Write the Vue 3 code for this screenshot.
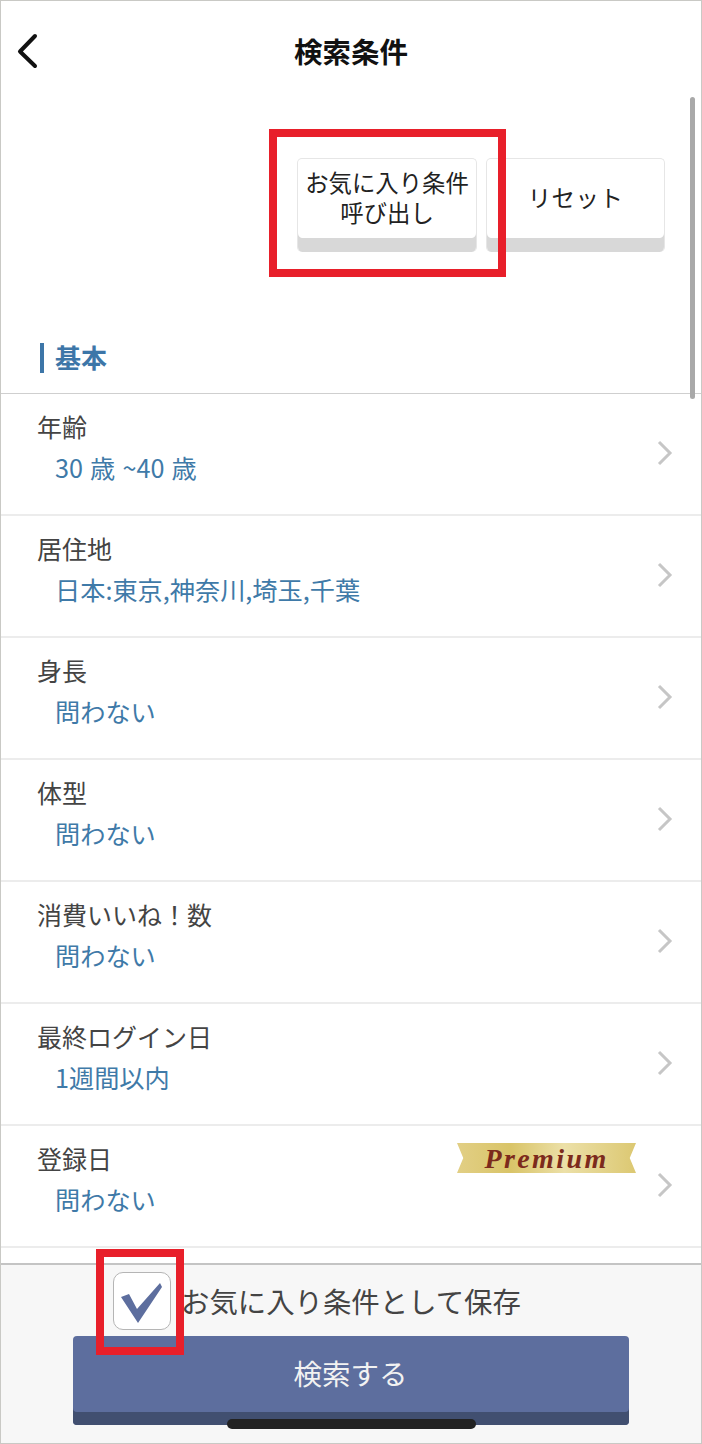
<template>
  <div class="screen">
    <header class="nav">
      <button class="back">
        <svg width="24" height="36" viewBox="0 0 24 36">
          <path d="M20 3 L5 18.5 L20 33" fill="none" stroke="#111" stroke-width="4" stroke-linecap="round" stroke-linejoin="round" />
        </svg>
      </button>
      <h1>検索条件</h1>
    </header>

    <div class="actions">
      <button class="btn-light">お気に入り条件<br>呼び出し</button>
      <button class="btn-light btn-reset">リセット</button>
    </div>

    <h2 class="section">基本</h2>

    <ul class="conditions">
      <li class="row" v-for="item in conditions" :key="item.label">
        <div class="row__text">
          <span class="row__label">{{ item.label }}</span>
          <span class="row__value">{{ item.value }}</span>
        </div>
        <div class="ribbon" v-if="item.premium">
          <span>Premium</span>
        </div>
        <svg class="chevron" width="16" height="26" viewBox="0 0 16 26">
          <path d="M2 2 L13 13 L2 24" fill="none" stroke="#c6c6c6" stroke-width="3" />
        </svg>
      </li>
    </ul>

    <footer class="footer">
      <label class="save">
        <span class="checkbox">
          <svg class="checkbox__mark" width="46" height="44" viewBox="0 0 46 44">
            <path d="M2 16 L10 13 L18 28 L41 2 L43 6 L19 42 Z" fill="#5d6e9e" />
          </svg>
        </span>
        <span class="save__text">お気に入り条件として保存</span>
      </label>
      <button class="btn-search">検索する</button>
    </footer>

    <div class="scroll-thumb"></div>
    <div class="home-bar"></div>
    <div class="mark mark--top"></div>
    <div class="mark mark--check"></div>
  </div>
</template>

<script setup>
const conditions = [
  { label: '年齢', value: '30 歳 ~40 歳' },
  { label: '居住地', value: '日本:東京,神奈川,埼玉,千葉' },
  { label: '身長', value: '問わない' },
  { label: '体型', value: '問わない' },
  { label: '消費いいね\uFF01数', value: '問わない' },
  { label: '最終ログイン日', value: '1週間以内' },
  { label: '登録日', value: '問わない', premium: true }
]
</script>

<style>
html, body {
  margin: 0;
  background: #fff;
}
</style>

<style scoped>
.screen {
  position: relative;
  width: 702px;
  height: 1444px;
  box-sizing: border-box;
  overflow: hidden;
  display: flex;
  flex-direction: column;
  background: #fff;
  border: 1px solid #c9c9c5;
  font-family: "Noto Sans CJK JP", "Noto Sans", sans-serif;
}

.nav {
  position: relative;
  height: 97px;
  padding-top: 2px;
  display: flex;
  align-items: center;
  justify-content: center;
  flex-shrink: 0;
}

.nav h1 {
  margin: 0;
  font-size: 28.5px;
  font-weight: 700;
  color: #111;
  line-height: 1;
}

.back {
  position: absolute;
  left: 14px;
  top: 32px;
  padding: 0;
  border: none;
  background: none;
}

.actions {
  display: flex;
  justify-content: flex-end;
  gap: 9px;
  padding: 58px 36px 0 0;
  flex-shrink: 0;
}

.btn-light {
  width: 180px;
  height: 94px;
  box-sizing: border-box;
  padding: 0 0 17px;
  border: 1px solid #e6e6e6;
  border-bottom: none;
  border-radius: 5px;
  background: #fff;
  box-shadow: inset 0 -14px 0 #d8d8d8;
  font-family: inherit;
  font-size: 23.4px;
  line-height: 30px;
  color: #222;
}

.btn-reset {
  width: 179px;
  letter-spacing: 0.5px;
}

.section {
  margin: 91px 0 0 39px;
  height: 30px;
  padding-left: 11px;
  border-left: 4px solid #3d76a8;
  font-size: 26px;
  font-weight: 700;
  line-height: 28px;
  color: #3d76a8;
  flex-shrink: 0;
}

.conditions {
  list-style: none;
  margin: 20px 0 0;
  padding: 0;
  border-top: 1px solid #cfcfcf;
  flex-shrink: 0;
}

.row {
  position: relative;
  height: 122px;
  box-sizing: border-box;
  padding: 15px 28px 0 36px;
  display: flex;
  justify-content: space-between;
  border-bottom: 2px solid #ececec;
}

.row__text {
  display: flex;
  flex-direction: column;
  gap: 7px;
}

.row__label {
  font-size: 25px;
  line-height: 34px;
  color: #444;
}

.row__value {
  padding-left: 18px;
  font-size: 25.2px;
  line-height: 34px;
  word-spacing: 1.5px;
  color: #3f7aa8;
}

.chevron {
  align-self: center;
  margin-top: -17px;
}

.ribbon {
  position: absolute;
  left: 456px;
  top: 17px;
  width: 179px;
  height: 30px;
  display: flex;
  align-items: center;
  justify-content: center;
  background: linear-gradient(90deg, #e2cf85 0%, #d9c468 30%, #ece0a8 60%, #dcc872 100%);
  clip-path: polygon(0 0, 100% 0, 96.5% 50%, 100% 100%, 0 100%, 3.5% 50%);
}

.ribbon span {
  margin-top: 2px;
  font-family: "Liberation Serif", serif;
  font-style: italic;
  font-weight: 700;
  font-size: 28px;
  letter-spacing: 2.4px;
  color: #7c2a1c;
}

.footer {
  position: absolute;
  left: 0;
  right: 0;
  bottom: 0;
  height: 178px;
  display: flex;
  flex-direction: column;
  align-items: center;
  background: #f7f7f7;
  border-top: 2px solid #c4c4c4;
}

.save {
  display: flex;
  align-items: center;
  height: 71px;
  align-self: flex-start;
  padding: 0 0 0 112px;
}

.checkbox {
  width: 58px;
  height: 58px;
  box-sizing: border-box;
  display: flex;
  align-items: center;
  justify-content: center;
  background: #fff;
  border: 1px solid #b5b5b5;
  border-radius: 10px;
}

.checkbox__mark {
  margin-top: 4px;
  flex-shrink: 0;
}

.save__text {
  margin-left: 10px;
  font-size: 28.4px;
  color: #444;
}

.btn-search {
  width: 556px;
  height: 89px;
  flex-shrink: 0;
  padding: 0 0 17px;
  margin-right: 1px;
  border: none;
  border-radius: 4px;
  background: #5d6e9e;
  box-shadow: inset 0 -13px 0 #414f70;
  font-family: inherit;
  font-size: 28.5px;
  color: #f2f2f2;
}

.scroll-thumb {
  position: absolute;
  left: 689px;
  top: 96px;
  width: 5px;
  height: 302px;
  border-radius: 3px;
  background: #a9a9a9;
}

.home-bar {
  position: absolute;
  left: 226px;
  top: 1418px;
  width: 249px;
  height: 10px;
  border-radius: 5px;
  background: #222;
}

.mark {
  position: absolute;
  box-sizing: border-box;
  border: 8px solid #e81f2a;
}

.mark--top {
  left: 268px;
  top: 128px;
  width: 237px;
  height: 148px;
}

.mark--check {
  left: 95px;
  top: 1248px;
  width: 88px;
  height: 106px;
}
</style>
